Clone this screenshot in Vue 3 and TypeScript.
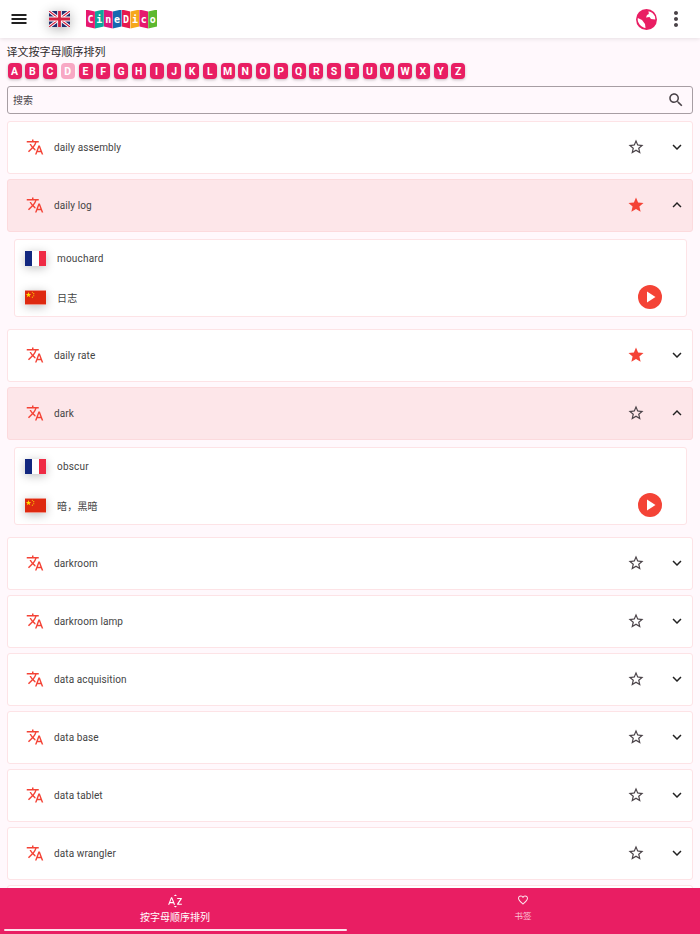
<template>
  <div class="page">
    <header class="topbar">
      <button class="icon-btn menu" aria-label="menu">
        <svg width="20" height="20" viewBox="0 0 24 24"><path d="M3 18h18v-2.400H3V18zm0-4.800h18v-2.400H3v2.400zM3 6v2.400h18V6H3z" fill="#212121" /></svg>
      </button>
      <div class="uk-flag">
        <svg width="21" height="16" viewBox="0 0 60 40" preserveAspectRatio="none">
          <rect width="60" height="40" fill="#1f2f6e" />
          <path d="M0 0L60 40M60 0L0 40" stroke="#fff" stroke-width="8" />
          <path d="M0 0L60 40M60 0L0 40" stroke="#d3213f" stroke-width="3" />
          <path d="M30 0V40M0 20H60" stroke="#fff" stroke-width="13" />
          <path d="M30 0V40M0 20H60" stroke="#d3213f" stroke-width="8" />
        </svg>
      </div>
      <div class="logo">
        <span
          v-for="(part, i) in logoParts"
          :key="i"
          class="logo-part"
          :class="i % 2 ? 'tilt-b' : 'tilt-a'"
          :style="{ background: part.color }"
        >{{ part.ch }}</span>
      </div>
      <div class="spacer" />
      <svg class="globe" width="21" height="21" viewBox="0 0 21 21">
        <circle cx="10.500" cy="10.500" r="10.500" fill="#e91e63" />
        <path d="M1.800 9L6 11l3 4 .5 4C5.500 18.500 2.300 15 1.700 11z" fill="#fff" />
        <path d="M12.500 2.200C15.500 2.800 17.800 4.800 19 7.600l.3 2.900-4.300-.5L13.500 8l-3.500.5 1-2.500 1.800-1z" fill="#fff" />
      </svg>
      <button class="icon-btn more" aria-label="more">
        <svg width="24" height="24" viewBox="0 0 24 24"><path d="M12 8c1.100 0 2-.9 2-2s-.9-2-2-2-2 .9-2 2 .9 2 2 2zm0 2c-1.100 0-2 .9-2 2s.9 2 2 2 2-.9 2-2-.9-2-2-2zm0 6c-1.100 0-2 .9-2 2s.9 2 2 2 2-.9 2-2-.9-2-2-2z" fill="#4a4348" /></svg>
      </button>
    </header>

    <main class="content">
      <div class="sort-title">译文按字母顺序排列</div>
      <div class="letters">
        <span
          v-for="l in letters"
          :key="l"
          class="letter"
          :class="{ active: l === 'D' }"
        >{{ l }}</span>
      </div>

      <div class="search">
        <span class="search-text">搜索</span>
        <svg width="18" height="18" viewBox="0 0 24 24"><path d="M15.500 14h-.79l-.28-.27C15.410 12.590 16 11.110 16 9.500 16 5.910 13.090 3 9.500 3S3 5.910 3 9.500 5.910 16 9.500 16c1.610 0 3.090-.59 4.230-1.570l.27.28v.79l5 4.990L20.490 19l-4.990-5zm-6 0C7.010 14 5 11.990 5 9.500S7.010 5 9.500 5 14 7.010 14 9.500 11.990 14 9.500 14z" fill="#4a4348" /></svg>
      </div>

      <div class="list">
        <template v-for="row in rows" :key="row.term">
          <div class="row" :class="{ open: row.fr }">
            <svg class="translate" width="18" height="18" viewBox="0 0 24 24">
              <path d="M12.870 15.070l-2.540-2.510.03-.03A17.520 17.520 0 0 0 14.070 6H17V4h-7V2H8v2H1v1.990h11.170C11.500 7.920 10.440 9.750 9 11.350 8.070 10.320 7.300 9.190 6.690 8h-2c.73 1.630 1.730 3.170 2.980 4.560l-5.090 5.020L4 19l5-5 3.110 3.110.76-2.040zM18.500 10h-2L12 22h2l1.120-3h4.750L21 22h2l-4.500-12zm-2.620 7l1.620-4.330L19.120 17h-3.240z" fill="#f44336" />
            </svg>
            <span class="term">{{ row.term }}</span>
            <svg class="star" width="18" height="18" viewBox="0 0 24 24">
              <path v-if="row.starred" d="M12 17.270L18.180 21l-1.640-7.030L22 9.240l-7.190-.61L12 2 9.190 8.630 2 9.240l5.460 4.730L5.820 21z" fill="#f44336" />
              <path v-else d="M22 9.240l-7.190-.62L12 2 9.190 8.630 2 9.240l5.460 4.730L5.820 21 12 17.270 18.180 21l-1.630-7.030L22 9.240zM12 15.400l-3.760 2.270 1-4.280-3.320-2.880 4.380-.38L12 6.100l1.710 4.040 4.380.38-3.320 2.880 1 4.280L12 15.400z" fill="#4a4348" />
            </svg>
            <svg class="chevron" width="18" height="18" viewBox="0 0 24 24">
              <path v-if="row.fr" d="M7.410 15.410L12 10.830l4.590 4.580L18 14l-6-6-6 6z" fill="#212121" />
              <path v-else d="M7.410 8.590L12 13.170l4.590-4.580L18 10l-6 6-6-6z" fill="#212121" />
            </svg>
          </div>

          <div v-if="row.fr" class="detail">
            <div class="lang-row">
              <div class="flag fr"><i /><i /><i /></div>
              <span class="word">{{ row.fr }}</span>
            </div>
            <div class="lang-row">
              <div class="flag cn">
                <svg width="21" height="15" viewBox="0 0 30 20">
                  <rect width="30" height="20" fill="#de2910" />
                  <path d="M5 2l1 3 3-.1-2.500 1.800 1 3L5 7.900 2.500 9.700l1-3L1 4.900 4 5z" fill="#ffde00" />
                  <circle cx="10.500" cy="2.500" r=".8" fill="#ffde00" />
                  <circle cx="12.500" cy="4.500" r=".8" fill="#ffde00" />
                  <circle cx="12.500" cy="7.500" r=".8" fill="#ffde00" />
                  <circle cx="10.500" cy="9.500" r=".8" fill="#ffde00" />
                </svg>
              </div>
              <span class="word">{{ row.zh }}</span>
              <div class="spacer" />
              <span class="play">
                <svg width="24" height="24" viewBox="0 0 24 24">
                  <circle cx="12" cy="12" r="12" fill="#f44336" />
                  <path d="M9 6.500v11l8.500-5.500z" fill="#fff" />
                </svg>
              </span>
            </div>
          </div>
        </template>
        <div class="row" />
      </div>
    </main>

    <nav class="tabs">
      <div class="tab current">
        <svg width="16" height="16" viewBox="0 0 24 24">
          <path d="M14.940 4.660h-4.720l2.360-2.360zm-4.690 14.680h4.660l-2.330 2.330zM6.100 6.270L1.600 17.730h1.840l.920-2.450h5.110l.920 2.450h1.840L7.720 6.270H6.100zm-1.130 7.370l1.940-5.180 1.940 5.180H4.970zM15.160 17.730h7.120v-1.620h-4.920l4.800-7.170V7.400h-6.870v1.640h4.700l-4.830 7.120z" fill="#fff" />
        </svg>
        <span class="tab-label">按字母顺序排列</span>
        <div class="tab-line" />
      </div>
      <div class="tab bookmarks">
        <svg width="12" height="12" viewBox="0 0 24 24">
          <path d="M16.500 3c-1.740 0-3.410.81-4.500 2.090C10.910 3.810 9.240 3 7.500 3 4.420 3 2 5.420 2 8.500c0 3.780 3.400 6.860 8.550 11.540L12 21.350l1.450-1.320C18.600 15.360 22 12.280 22 8.500 22 5.420 19.580 3 16.500 3zm-4.400 15.550l-.1.100-.1-.1C7.140 14.240 4 11.390 4 8.500 4 6.500 5.500 5 7.500 5c1.540 0 3.040.99 3.570 2.360h1.870C13.460 5.990 14.960 5 16.500 5c2 0 3.500 1.500 3.500 3.500 0 2.890-3.140 5.740-7.900 10.050z" fill="#fce4ec" />
        </svg>
        <span class="tab-label small">书签</span>
      </div>
    </nav>
  </div>
</template>

<script setup lang="ts">
interface Row {
  term: string
  starred?: boolean
  fr?: string
  zh?: string
}

const letters = 'ABCDEFGHIJKLMNOPQRSTUVWXYZ'.split('')

const logoParts = [
  { ch: 'C', color: '#e6196e' },
  { ch: 'i', color: '#0fa59a' },
  { ch: 'n', color: '#d9187c' },
  { ch: 'e', color: '#1769b0' },
  { ch: 'D', color: '#e6194e' },
  { ch: 'i', color: '#f6a81c' },
  { ch: 'c', color: '#e6196e' },
  { ch: 'o', color: '#5cb82e' },
]

const rows: Row[] = [
  { term: 'daily assembly' },
  { term: 'daily log', starred: true, fr: 'mouchard', zh: '日志' },
  { term: 'daily rate', starred: true },
  { term: 'dark', fr: 'obscur', zh: '暗，黑暗' },
  { term: 'darkroom' },
  { term: 'darkroom lamp' },
  { term: 'data acquisition' },
  { term: 'data base' },
  { term: 'data tablet' },
  { term: 'data wrangler' },
]
</script>

<style>
html,
body {
  margin: 0;
  background: #fff8fc;
}
</style>

<style scoped>
.page {
  height: 934px;
  display: flex;
  flex-direction: column;
  overflow: hidden;
  background: #fff8fc;
  font-family: Roboto, "Noto Sans CJK SC", sans-serif;
  color: #444;
}

.topbar {
  height: 38px;
  flex-shrink: 0;
  display: flex;
  align-items: center;
  background: #fff;
  box-shadow: 0 1px 4px rgba(0, 0, 0, 0.1);
  position: relative;
  z-index: 1;
}

.icon-btn {
  border: 0;
  padding: 0;
  background: none;
  display: flex;
}

.menu {
  margin-left: 9px;
}

.uk-flag {
  margin-left: 20px;
  height: 16px;
  display: flex;
  box-shadow: 0 2px 12px rgba(0, 0, 0, 0.3);
}

.logo {
  margin-left: 16px;
  display: flex;
}

.logo-part {
  width: 8.900px;
  height: 19px;
  display: flex;
  align-items: center;
  justify-content: center;
  color: #fff;
  font-family: "DejaVu Sans Mono", monospace;
  font-weight: 700;
  font-size: 10px;
}

.tilt-a {
  clip-path: polygon(0 0, 100% 10%, 100% 100%, 0 90%);
}

.tilt-b {
  clip-path: polygon(0 10%, 100% 0, 100% 90%, 0 100%);
}

.spacer {
  flex: 1;
}

.more {
  margin-left: 7px;
  margin-right: 12px;
}

.content {
  flex: 1;
  min-height: 0;
  padding: 7px 7px 0;
  overflow: hidden;
}

.sort-title {
  font-size: 11px;
  line-height: 16px;
  height: 16px;
  margin-left: -0.500px;
  color: #2e2a2c;
}

.letters {
  display: flex;
  gap: 3.750px;
  margin: 2px 0 0 0.500px;
}

.letter {
  width: 14px;
  height: 16px;
  border-radius: 4px;
  background: #e91e63;
  color: #fff;
  font-size: 10.500px;
  font-weight: 700;
  display: flex;
  align-items: center;
  justify-content: center;
  box-shadow: 0 1px 3px rgba(0, 0, 0, 0.25);
}

.letter.active {
  background: #f8a8c4;
  box-shadow: none;
}

.search {
  margin-top: 7px;
  height: 26px;
  border: 1px solid #a79ea3;
  border-radius: 3px;
  display: flex;
  align-items: center;
  justify-content: space-between;
  padding: 0 7px 0 5px;
}

.search-text {
  margin-bottom: 2px;
  font-size: 10px;
  color: #4a4348;
}

.list {
  margin-top: 7px;
}

.row {
  height: 51px;
  margin-bottom: 5px;
  display: flex;
  align-items: center;
  background: #fff;
  border: 1px solid #fde3e6;
  border-radius: 3px;
  padding-left: 18px;
}

.row.open {
  background: #fde6e9;
  border-color: #fcdadd;
}

.row svg {
  margin-bottom: 2px;
}

.translate {
  flex-shrink: 0;
}

.term {
  margin-left: 10px;
  font-size: 10px;
  letter-spacing: 0.1px;
  flex: 1;
}

.star {
  margin-right: 23px;
}

.chevron {
  margin-right: 6px;
}

.detail {
  margin: 7px 7px 12px;
  height: 76px;
  display: flex;
  flex-direction: column;
  background: #fff;
  border: 1px solid #fde3e6;
  border-radius: 3px;
  padding: 0 24px 0 10px;
  box-sizing: content-box;
  width: 637px;
}

.lang-row {
  height: 36px;
  flex-shrink: 0;
  display: flex;
  align-items: center;
}

.lang-row + .lang-row {
  height: 40px;
  padding-top: 2px;
  box-sizing: border-box;
}

.flag {
  width: 21px;
  height: 15px;
  display: flex;
  flex-shrink: 0;
  box-shadow: 0 2px 10px rgba(0, 0, 0, 0.25);
}

.flag i {
  flex: 1;
}

.fr i:nth-child(1) {
  background: #12277f;
}

.fr i:nth-child(2) {
  background: #fff;
}

.fr i:nth-child(3) {
  background: #ef2b45;
}

.word {
  margin-left: 11px;
  font-size: 10px;
  letter-spacing: 0.2px;
}

.play {
  display: flex;
}

.tabs {
  height: 46px;
  flex-shrink: 0;
  display: flex;
  background: #e91e63;
  position: relative;
}

.tab {
  flex: 1;
  display: flex;
  flex-direction: column;
  align-items: center;
  position: relative;
  padding-top: 5px;
  color: #fff;
}

.current {
  padding-left: 1px;
}

.bookmarks {
  padding-top: 6px;
  padding-right: 3px;
}

.tab-label {
  margin-top: 2px;
  font-size: 10px;
  line-height: 14px;
}

.tab-label.small {
  margin-top: 4px;
  font-size: 8.500px;
  line-height: 12px;
  color: #fbc4d6;
}

.tab-line {
  position: absolute;
  left: 4px;
  right: 2px;
  top: 41px;
  height: 2px;
  border-radius: 1px;
  background: #fce4ec;
}
</style>
